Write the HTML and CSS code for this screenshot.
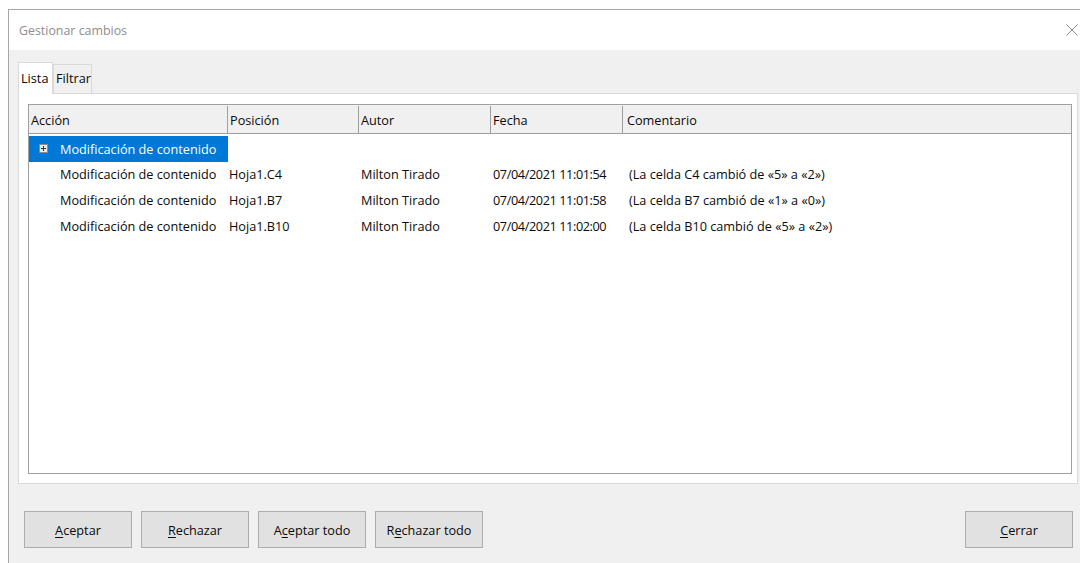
FILE: index.html
```html
<!DOCTYPE html>
<html lang="es">
<head>
<meta charset="utf-8">
<title>Gestionar cambios</title>
<link rel="stylesheet" href="styles.css">
</head>
<body>
<div class="window">
  <div class="titlebar">
    <span class="title">Gestionar cambios</span>
    <svg class="close" width="12" height="12" viewBox="0 0 12 12" aria-hidden="true">
      <path d="M0.5 0.5 L11.5 11.5 M11.5 0.5 L0.5 11.5" stroke="#8a8a8a" stroke-width="1" fill="none"/>
    </svg>
  </div>
  <div class="dialog-body">
    <div class="tabs">
      <div class="tab tab-active">Lista</div>
      <div class="tab">Filtrar</div>
    </div>
    <div class="tab-panel">
      <div class="list">
        <div class="row row-head">
          <div class="cell c1">Acción</div>
          <div class="cell c2">Posición</div>
          <div class="cell c3">Autor</div>
          <div class="cell c4">Fecha</div>
          <div class="cell c5">Comentario</div>
        </div>
        <div class="rows">
          <div class="row">
            <div class="cell c1 selected">
              <svg class="expander" width="9" height="9" viewBox="0 0 9 9" aria-hidden="true">
                <rect x="0.5" y="0.5" width="8" height="8" fill="#e8e8e8" stroke="#8c8c8c"/>
                <path d="M2 4.5 H7 M4.5 2 V7" stroke="#333" stroke-width="1"/>
              </svg>
              <span>Modificación de contenido</span>
            </div>
            <div class="cell c2"></div>
            <div class="cell c3"></div>
            <div class="cell c4"></div>
            <div class="cell c5"></div>
          </div>
          <div class="row">
            <div class="cell c1"><span>Modificación de contenido</span></div>
            <div class="cell c2">Hoja1.C4</div>
            <div class="cell c3">Milton Tirado</div>
            <div class="cell c4 date">07/04/2021 11:01:54</div>
            <div class="cell c5">(La celda C4 cambió de «5» a «2»)</div>
          </div>
          <div class="row">
            <div class="cell c1"><span>Modificación de contenido</span></div>
            <div class="cell c2">Hoja1.B7</div>
            <div class="cell c3">Milton Tirado</div>
            <div class="cell c4 date">07/04/2021 11:01:58</div>
            <div class="cell c5">(La celda B7 cambió de «1» a «0»)</div>
          </div>
          <div class="row">
            <div class="cell c1"><span>Modificación de contenido</span></div>
            <div class="cell c2">Hoja1.B10</div>
            <div class="cell c3">Milton Tirado</div>
            <div class="cell c4 date">07/04/2021 11:02:00</div>
            <div class="cell c5">(La celda B10 cambió de «5» a «2»)</div>
          </div>
        </div>
      </div>
    </div>
    <div class="buttons">
      <button class="btn"><u>A</u>ceptar</button>
      <button class="btn"><u>R</u>echazar</button>
      <button class="btn">A<u>c</u>eptar todo</button>
      <button class="btn">R<u>e</u>chazar todo</button>
      <button class="btn btn-close"><u>C</u>errar</button>
    </div>
  </div>
</div>
</body>
</html>
```

FILE: styles.css
```css
html, body {
  margin: 0;
  padding: 0;
  background: #ffffff;
  height: 100%;
  overflow: hidden;
}

body {
  font-family: "Open Sans", "Noto Sans", sans-serif;
  font-size: 12.7px;
  color: #0a0a0a;
}

.window {
  margin: 9px 0 0 8px;
  border-top: 1px solid #a6a6a6;
  border-left: 1px solid #a6a6a6;
  height: calc(100% - 10px);
  display: flex;
  flex-direction: column;
}

/* title bar */
.titlebar {
  height: 40px;
  flex: none;
  background: #ffffff;
  display: flex;
  align-items: center;
  justify-content: space-between;
  padding: 0 2px 0 10px;
}

.title {
  color: #8d8d8d;
  font-size: 12.4px;
}

.close {
  display: block;
}

/* dialog body */
.dialog-body {
  flex: 1;
  background: #f0f0f0;
  padding: 12px 2px 0 9px;
  display: flex;
  flex-direction: column;
}

.tabs {
  display: flex;
  align-items: flex-end;
  height: 31px;
}

.tab {
  box-sizing: border-box;
  border: 1px solid #d9d9d9;
  border-bottom: none;
  background: #f0f0f0;
  height: 29px;
  width: 39px;
  padding-left: 2px;
  line-height: 27px;
}

.tab-active {
  position: relative;
  z-index: 1;
  background: #ffffff;
  height: 32px;
  width: 35px;
  margin-bottom: -1px;
  padding-top: 2px;
}

.tab-panel {
  height: 391px;
  box-sizing: border-box;
  background: #ffffff;
  border: 1px solid #d9d9d9;
  padding: 10px 5px 9px 9px;
  display: flex;
  flex-direction: column;
}

/* change list */
.list {
  flex: 1;
  border: 1px solid #9f9f9f;
  background: #ffffff;
  display: flex;
  flex-direction: column;
}

.row {
  display: grid;
  grid-template-columns: 199px 131px 132px 132px 1fr;
  height: 25.67px;
  align-items: stretch;
}

.cell {
  display: flex;
  align-items: center;
  white-space: nowrap;
  box-sizing: border-box;
}

.row-head {
  height: 29px;
  background: #f0f0f0;
  border-bottom: 1px solid #9f9f9f;
  box-sizing: border-box;
  padding-top: 1px;
}

.row-head .cell {
  border-right: 1px solid #9f9f9f;
  padding-left: 2px;
}

.row-head .c5 {
  border-right: none;
  padding-left: 4px;
}

.rows {
  padding-top: 2px;
}

.rows .c1 {
  padding-left: 31px;
}

.rows .c2 {
  padding-left: 1px;
}

.rows .c3 {
  padding-left: 2px;
}

.rows .c4 {
  padding-left: 2px;
}

.rows .c5 {
  padding-left: 6px;
}

.date {
  letter-spacing: -0.4px;
}

.rows .selected {
  background: #0078d7;
  color: #ffffff;
  padding-left: 10px;
}

.expander {
  display: block;
  margin-right: 12px;
  flex: none;
}

/* buttons */
.buttons {
  display: flex;
  gap: 9px;
  margin-top: 27px;
  padding: 0 5px 0 6px;
}

.btn {
  box-sizing: border-box;
  width: 108px;
  height: 37px;
  background: #e1e1e1;
  border: 1px solid #adadad;
  border-radius: 0;
  font-family: inherit;
  font-size: 12.7px;
  color: #0a0a0a;
  padding: 0;
}

.btn u {
  text-underline-offset: 2px;
}

.btn-close {
  margin-left: auto;
}
```
